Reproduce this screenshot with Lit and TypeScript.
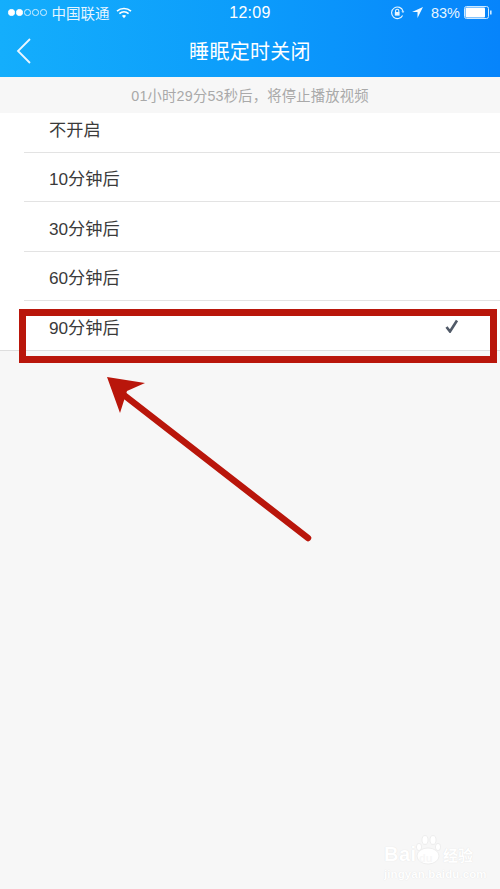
import { LitElement, html, css, svg } from "lit";
import { customElement } from "lit/decorators.js";

const rows = ["不开启", "10分钟后", "30分钟后", "60分钟后", "90分钟后"];

@customElement("app-root")
export class AppRoot extends LitElement {
  static styles = css`
    :host { display: block; width: 500px; height: 889px; position: relative; overflow: hidden; background: #f7f7f7;
      font-family: "Liberation Sans", "Noto Sans CJK SC", sans-serif; color: #333; }
    .head { height: 77px; background: linear-gradient(90deg, #14aefc 0%, #0c9cfb 50%, #0684fb 100%); color: #fff; display: flex; flex-direction: column; }
    .status { height: 25px; display: grid; grid-template-columns: 1fr auto 1fr; align-items: center; padding: 0 8px; font-size: 14.5px; color: #e6f5ff; }
    .sl { display: flex; align-items: center; gap: 6px; }
    .sr { display: flex; align-items: center; justify-content: flex-end; gap: 5px; }
    .sig { display: flex; gap: 1.5px; margin-right: -1px; }
    .dot { width: 6.5px; height: 6.5px; border-radius: 50%; box-sizing: border-box; border: 1px solid #d5efff; }
    .dot.on { background: #fff; border-color: #fff; }
    .time { font-size: 16px; font-weight: 500; color: #fff; letter-spacing: .3px; }
    .nav { flex: 1; display: flex; align-items: center; justify-content: center; position: relative; font-size: 20px; padding-bottom: 2px; letter-spacing: .3px; }
    .back { position: absolute; left: 16px; top: 13px; }
    .sub { height: 36px; display: flex; align-items: center; justify-content: center; font-size: 14.3px; color: #a9a9a9; background: #f7f7f7; letter-spacing: .2px; padding-bottom: 2px; box-sizing: border-box; }
    .list { background: #fff; height: 238px; border-bottom: 1px solid #dedede; box-sizing: border-box; display: flex; flex-direction: column; padding-left: 24px; }
    .row { height: 49.4px; flex: none; box-sizing: border-box; border-bottom: 1px solid #e3e3e3; display: flex; align-items: center; justify-content: space-between; padding: 1px 41px 0 25px; font-size: 17.2px; color: #3a3a3a; }
    .row:first-child { height: 40px; padding-top: 0; }
    .row:first-child span { position: relative; top: -4px; }
    .row:last-child { border-bottom: none; }
    .mark { position: absolute; left: 19px; top: 309px; width: 478px; height: 54px; box-sizing: border-box; border: 7px solid #b9160b; pointer-events: none; }
    .overlay { position: absolute; left: 0; top: 0; pointer-events: none; }
    .wm { position: absolute; left: 384px; top: 835px; width: 100px; color: #fff; }
    .brand { display: flex; align-items: flex-end; height: 30px; font-weight: 700; text-shadow: 0 0 1px #dcdcdc; }
    .bai { font-size: 20px; line-height: 22px; letter-spacing: .5px; width: 31px; }
    .paw { width: 26px; height: 30px; margin-right: 2px; position: relative; flex: none; }
    .paw svg { display: block; }
    .du { position: absolute; left: 4px; bottom: 0; font-size: 11px; line-height: 13px; color: #f7f7f7; text-shadow: none; }
    .jy { font-size: 15px; line-height: 19px; }
    .url { font-size: 11.5px; line-height: 14px; font-weight: 700; margin-top: 2px; letter-spacing: .1px; white-space: nowrap; text-shadow: 0 0 1px #dcdcdc; }
  `;

  private wifi() {
    return html`<svg width="16" height="12" viewBox="0 0 16 12" fill="none" stroke="#fff" stroke-width="1.6">
      <path d="M1 4.2C5 .6 11 .6 15 4.2"/><path d="M3.4 6.6c2.7-2.3 6.5-2.3 9.2 0"/><path d="M8 11.2 5.9 8.8c1.2-1 3-1 4.2 0z" fill="#fff" stroke="none"/>
    </svg>`;
  }

  render() {
    return html`
      <div class="head">
        <div class="status">
          <div class="sl">
            <div class="sig">${[1, 1, 0, 0, 0].map((o) => html`<i class="dot ${o ? "on" : ""}"></i>`)}</div>
            <span>中国联通</span>
            ${this.wifi()}
          </div>
          <div class="time">12:09</div>
          <div class="sr">
            <svg width="15" height="14" viewBox="0 0 15 14" fill="none" stroke="#e6f5ff" stroke-width="1.1">
              <path d="M12.6 9.4A5.8 5.8 0 1 1 13 5.2"/><path d="M11.4 5.2h3L13 7z" fill="#e6f5ff" stroke="none"/>
              <rect x="4.8" y="6" width="4.8" height="3.6" fill="#e6f5ff" stroke="none"/><path d="M5.6 6V4.8a1.6 1.6 0 0 1 3.2 0V6"/>
            </svg>
            <svg width="11" height="11" viewBox="0 0 11 11" style="margin:0 3px 0 2px"><path d="M11 0 0 5h5.5V11z" fill="#f0f9ff"/></svg>
            <span>83%</span>
            <svg width="28" height="13" viewBox="0 0 28 13" style="margin-left:-1px">
              <rect x=".5" y=".5" width="24" height="12" rx="2" fill="none" stroke="#cde9ff"/>
              <rect x="1.5" y="1.5" width="19.5" height="10" rx="1" fill="#fff"/>
              <rect x="26" y="4.5" width="1.6" height="4" fill="#cde9ff"/>
            </svg>
          </div>
        </div>
        <div class="nav">
          <svg class="back" width="16" height="26" viewBox="0 0 16 26" fill="none" stroke="#e9f6ff" stroke-width="1.8">
            <path d="M14 1 2 13l12 12"/>
          </svg>
          睡眠定时关闭
        </div>
      </div>
      <div class="sub">01小时29分53秒后，将停止播放视频</div>
      <div class="list">
        ${rows.map((r, i) => html`<div class="row"><span>${r}</span>${i === 4
          ? html`<svg width="14" height="14" viewBox="0 0 14 14" fill="none" stroke="#515a68" stroke-width="2.6"><path d="M1.5 8 5 12.5 12 1.5"/></svg>`
          : ""}</div>`)}
      </div>
      <div class="mark"></div>
      <svg class="overlay" width="500" height="889" viewBox="0 0 500 889">
        ${svg`<path d="M120 392 308 538" stroke="#b9160b" stroke-width="6.5" stroke-linecap="round" fill="none"/>
        <path d="M107 377 145 383 127 391 120 413z" fill="#b9160b"/>`}
      </svg>
      <div class="wm">
        <div class="brand">
          <span class="bai">Bai</span>
          <span class="paw">
            <svg width="26" height="30" viewBox="0 0 26 30" fill="#fff" stroke="#e4e4e4" stroke-width=".6">
              <ellipse cx="4" cy="12" rx="2.6" ry="3.6"/><ellipse cx="10" cy="5" rx="3" ry="4.4"/><ellipse cx="18" cy="5" rx="3" ry="4.4"/><ellipse cx="23" cy="12" rx="2.6" ry="3.6"/>
              <ellipse cx="13" cy="21" rx="11" ry="8"/>
            </svg>
            <span class="du">du</span>
          </span>
          <span class="jy">经验</span>
        </div>
        <div class="url">jingyan.baidu.com</div>
      </div>
    `;
  }
}
